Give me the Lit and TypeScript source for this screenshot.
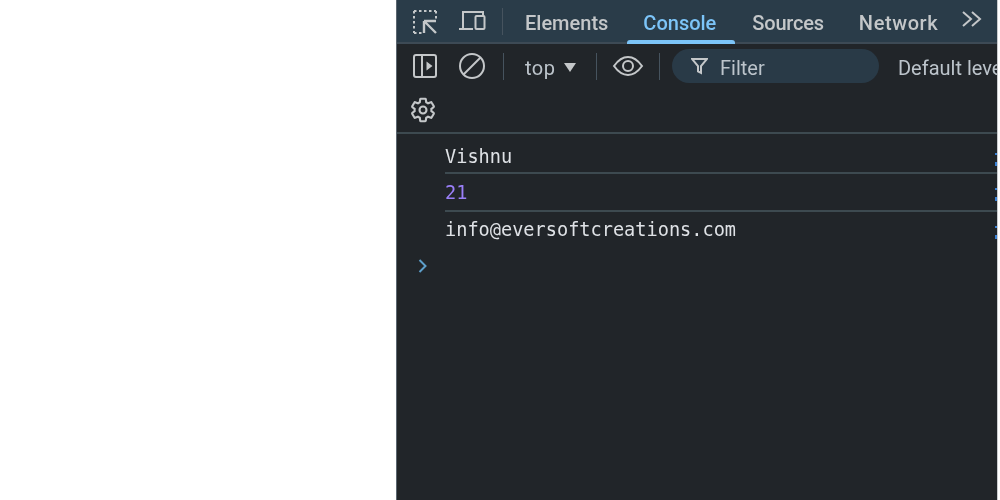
import { LitElement, html, css } from "lit";
import { customElement } from "lit/decorators.js";

@customElement("app-root")
export class AppRoot extends LitElement {
  static styles = css`
    :host { display: block; width: 1000px; height: 500px; background: #fff; overflow: hidden; }
    .page { display: flex; height: 500px; padding-left: 396px; box-sizing: border-box; }
    .panel { width: 601px; height: 500px; background: #212529; border-left: 1px solid #5b6670; box-sizing: border-box; font-family: "Roboto", "Open Sans", sans-serif; color: #c7c9cc; overflow: hidden; display: flex; flex-direction: column; position: relative; filter: blur(0.35px); }
    .edge { width: 1px; background: #c9cbcd; }
    svg { display: block; flex: none; fill: none; stroke: #c4c7c9; stroke-width: 2; }
    .tabs { height: 44px; flex: none; background: #2a3c49; border-bottom: 2px solid #3d4a55; box-sizing: border-box; display: flex; align-items: center; padding-left: 15px; position: relative; }
    .tab { font-size: 20px; color: #c4c7c9; white-space: nowrap; font-weight: 500; margin-top: 3px; }
    .tab.active { color: #7cc4f8; }
    .underline { position: absolute; left: 230px; top: 40px; width: 108px; height: 4px; background: #7cc4f8; border-radius: 3px 3px 0 0; }
    .sep { width: 1px; height: 27px; background: #46535e; flex: none; }
    .bar { height: 44px; flex: none; display: flex; align-items: center; padding-left: 15px; white-space: nowrap; font-size: 20px; }
    .bar2 { height: 43px; padding-left: 12px; border-bottom: 2px solid #3d4a50; box-sizing: content-box; padding-bottom: 1px; }
    .top { color: #bcc4cb; margin: 3px 0 0 21px; letter-spacing: .5px; }
    .caret { width: 0; height: 0; border-left: 6.5px solid transparent; border-right: 6.5px solid transparent; border-top: 9px solid #c4c7c9; margin-left: 9px; margin-top: 3px; }
    .filter { width: 207px; height: 34px; border-radius: 17px; background: #293a47; margin-left: 12px; display: flex; align-items: center; padding-left: 19px; box-sizing: border-box; color: #bcc4cb; flex: none; }
    .filter span { margin: 3px 0 0 12px; }
    .levels { margin: 3px 0 0 19px; color: #bcc4cb; }
    .rows { display: flex; flex-direction: column; font-family: "DejaVu Sans Mono", monospace; font-size: 18.6px; color: #dfe2e6; }
    .row { height: 38px; margin-left: 48px; display: flex; align-items: center; box-sizing: border-box; border-bottom: 2px solid #3d4a50; position: relative; }
    .row.first { height: 40px; padding-top: 7px; }
    .row.last { height: 34px; border-bottom: 0; }
    .num { color: #9a7ff8; }
    .src { position: absolute; right: 0; top: 14px; width: 2px; }
    .row.first .src { top: 19px; }
    .src i { display: block; width: 2px; height: 2px; background: #3b82d6; margin-bottom: 7px; }
    .src i + i { height: 4px; }
    .prompt { margin: 12px 0 0 21px; }
    .prompt svg { stroke: #5d9fca; }
  `;

  render() {
    return html`<div class="page"><div class="panel">
      <div class="tabs">
        <svg width="26" height="26" viewBox="0 0 26 26" style="margin-right:20px"><path d="M2 3h22M2 3v22M24 3v8M2 25h9" stroke-dasharray="2.500 2.500"/><path d="M12 13h12M12 13v12M13 14l11 11" stroke-width="2.400"/></svg>
        <svg width="28" height="24" viewBox="0 0 28 24" style="margin-right:16px"><path d="M5 20V3h20v4M1 20h14"/><rect x="17.500" y="7" width="9" height="13" rx="1"/></svg>
        <div class="sep"></div>
        <span class="tab" style="margin-left:22px">Elements</span>
        <span class="tab active" style="margin-left:35px">Console</span>
        <span class="tab" style="margin-left:36px;letter-spacing:-.2px">Sources</span>
        <span class="tab" style="margin-left:35px;letter-spacing:.6px">Network</span>
        <svg width="22" height="18" viewBox="0 0 22 18" style="margin-left:23px;margin-top:-4px"><path d="M2 2l8 7-8 7M11 2l8 7-8 7"/></svg>
        <div class="underline"></div>
      </div>
      <div class="bar">
        <svg width="26" height="26" viewBox="0 0 26 26" style="margin-right:20px"><rect x="2" y="2" width="22" height="22" rx="2"/><path d="M10 2v22"/><path d="M14.500 8.500l6 4.500-6 4.500z" fill="#c4c7c9" stroke="none"/></svg>
        <svg width="28" height="28" viewBox="0 0 28 28" style="margin-right:17px"><circle cx="14" cy="14" r="12"/><path d="M5.500 22.500l17-17"/></svg>
        <div class="sep"></div>
        <span class="top">top</span>
        <div class="caret"></div>
        <div class="sep" style="margin-left:19.500px"></div>
        <svg width="32" height="24" viewBox="0 0 32 24" style="margin-left:15px;margin-right:15px"><path d="M2 12C7 5 11 3 16 3s9 2 14 9c-5 7-9 9-14 9S7 19 2 12z"/><circle cx="16" cy="12" r="5"/></svg>
        <div class="sep"></div>
        <div class="filter">
          <svg width="17" height="18" viewBox="0 0 17 18"><path d="M1 2h15l-6 7v7l-3-1.500V9z"/></svg>
          <span>Filter</span>
        </div>
        <span class="levels">Default levels</span>
      </div>
      <div class="bar bar2">
        <svg width="28" height="28" viewBox="0 0 24 24" style="stroke-width:1.800"><path d="M19.140 12.940c.04-.3.06-.61.06-.94 0-.32-.02-.64-.07-.94l2.030-1.580c.18-.14.23-.41.12-.61l-1.920-3.320c-.12-.22-.37-.29-.59-.22l-2.390.96c-.5-.38-1.030-.7-1.620-.94l-.36-2.540c-.04-.24-.24-.41-.48-.41h-3.840c-.24 0-.43.17-.47.41l-.36 2.540c-.59.24-1.130.57-1.620.94l-2.390-.96c-.22-.08-.47 0-.59.22L2.740 8.870c-.12.21-.08.47.12.61l2.030 1.580c-.05.3-.09.63-.09.94s.02.64.07.94l-2.030 1.580c-.18.14-.23.41-.12.61l1.920 3.320c.12.22.37.29.59.22l2.390-.96c.5.38 1.030.7 1.620.94l.36 2.540c.05.24.24.41.48.41h3.840c.24 0 .44-.17.47-.41l.36-2.540c.59-.24 1.130-.56 1.620-.94l2.390.96c.22.08.47 0 .59-.22l1.920-3.320c.12-.22.07-.47-.12-.61l-2.010-1.580z"/><circle cx="12" cy="12" r="3"/></svg>
      </div>
      <div class="rows">
        <div class="row first"><span>Vishnu</span><div class="src"><i></i><i></i></div></div>
        <div class="row"><span class="num">21</span><div class="src"><i></i><i></i></div></div>
        <div class="row last"><span>info@eversoftcreations.com</span><div class="src"><i></i><i></i></div></div>
      </div>
      <div class="prompt"><svg width="10" height="16" viewBox="0 0 10 16"><path d="M1.500 2l6 6-6 6"/></svg></div>
    </div><div class="edge"></div></div>`;
  }
}
